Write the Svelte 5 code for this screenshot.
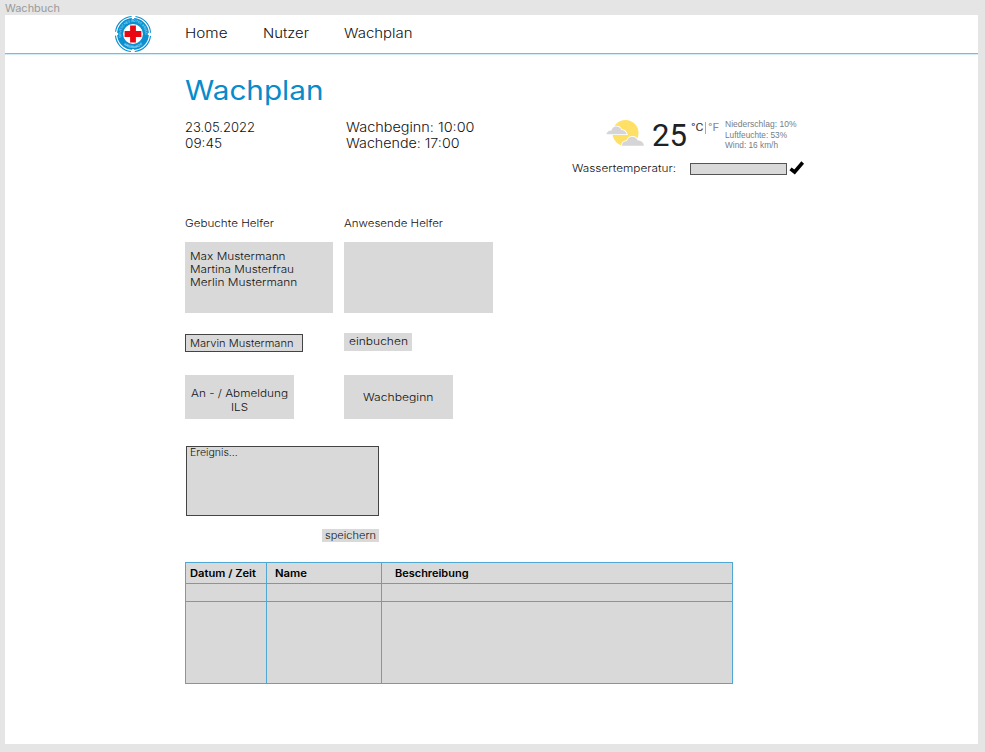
<script>
  const nav = [
    { text: 'Home', width: 42.5, gap: 35.5 },
    { text: 'Nutzer', width: 46, gap: 34.7 },
    { text: 'Wachplan', width: 68.5, gap: 0 }
  ];
  const booked = [
    { text: 'Max Mustermann', width: 95.5 },
    { text: 'Martina Musterfrau', width: 104 },
    { text: 'Merlin Mustermann', width: 107.3 }
  ];
  const weather = [
    { text: 'Niederschlag: 10%', width: 71.5 },
    { text: 'Luftfeuchte: 53%', width: 62 },
    { text: 'Wind: 16 km/h', width: 53 }
  ];
</script>

{#snippet label(text, width, size = 10.7, height = 14)}
  <svg class="label" {width} {height} font-size={size}>
    <text x="0" y={size} textLength={width} lengthAdjust="spacingAndGlyphs">{text}</text>
  </svg>
{/snippet}

<div class="canvas">
  <div class="caption">{@render label('Wachbuch', 55, 10.5, 14)}</div>
  <div class="frame">
    <header>
      <svg class="logo" width="38" height="38" viewBox="-19 -19 38 38">
        <circle r="18" fill="#fff" />
        <circle r="17.6" fill="none" stroke="#0b8fd0" stroke-width="1.1" stroke-dasharray="23.6 4.046" stroke-dashoffset="-2" />
        <circle r="12.9" fill="none" stroke="#0b8fd0" stroke-width="6" />
        <path d="M0 -16.4V-15M0 16.4V15M-16.4 0H-15M16.4 0H15" stroke="#fff" stroke-width="2" />
        <path id="arc-top" d="M-11.8 3.2A12.2 12.2 0 1 1 11.8 3.2" fill="none" />
        <path id="arc-bottom" d="M-11.4 8.2A14 14 0 0 0 11.4 8.2" fill="none" />
        <g font-size="3.2" font-weight="500" fill="#b5e0f5">
          <text><textPath href="#arc-top" textLength="42">DEUTSCHES ROTES KREUZ</textPath></text>
          <text><textPath href="#arc-bottom" startOffset="3" textLength="21">WASSERWACHT</textPath></text>
        </g>
        <path d="M-2.9 -8.4H2.9V-2.9H8.4V2.9H2.9V8.4H-2.9V2.9H-8.4V-2.9H-2.9Z" fill="#e90713" />
      </svg>
      <nav>
        {#each nav as item}
          <a href="#top" style="margin-right: {item.gap}px">{@render label(item.text, item.width, 13, 17)}</a>
        {/each}
      </nav>
    </header>

    <main>
      <h1>{@render label('Wachplan', 138.5, 26.7, 30)}</h1>

      <section class="info">
        <div class="date">
          {@render label('23.05.2022', 70, 13, 16)}
          {@render label('09:45', 37, 13, 16)}
        </div>
        <div class="shift">
          {@render label('Wachbeginn: 10:00', 128.5, 13, 16)}
          {@render label('Wachende: 17:00', 113.5, 13, 16)}
        </div>
        <div class="conditions">
          <div class="weather">
            <svg class="sun" width="40" height="30" viewBox="0 0 40 30">
              <circle cx="19.5" cy="14" r="13" fill="#ffe066" />
              <path d="M0.5 15.2Q1 11.5 5.5 11.4Q6.7 7.2 10.7 7.6Q14.3 7.9 15.1 10.7Q19.7 11.2 20.7 15.2Z" fill="#d5d5d7" stroke="#fff" stroke-width="1.6" paint-order="stroke" />
              <path d="M16 26.7Q16 22.4 20.8 22.1Q22.8 17.2 27.4 17.9Q30.4 18.2 31.4 21.3Q37 21.4 38 26.7Z" fill="#d5d5d7" stroke="#fff" stroke-width="1.6" paint-order="stroke" />
            </svg>
            <div class="degrees">{@render label('25', 35, 32, 36)}</div>
            <div class="units">
              <span>{@render label('°C', 12.5, 11)}</span>
              <i></i>
              <span class="off">{@render label('°F', 11, 11)}</span>
            </div>
            <div class="stats">
              {#each weather as line}
                {@render label(line.text, line.width, 8.6, 10.7)}
              {/each}
            </div>
          </div>
          <div class="water">
            {@render label('Wassertemperatur:', 104)}
            <div class="water-input"></div>
            <svg class="check" width="16" height="14" viewBox="0 0 16 14">
              <path d="M1.5 7.8L5.6 11L13.7 1.5" fill="none" stroke="#000" stroke-width="3.5" />
            </svg>
          </div>
        </div>
      </section>

      <section class="helpers">
        <div class="column">
          {@render label('Gebuchte Helfer', 89)}
          <div class="list">
            {#each booked as person}
              {@render label(person.text, person.width, 10.7, 13.4)}
            {/each}
          </div>
        </div>
        <div class="column">
          {@render label('Anwesende Helfer', 99)}
          <div class="list"></div>
        </div>
      </section>

      <section class="booking">
        <div class="name-input">{@render label('Marvin Mustermann', 103.5)}</div>
        <button class="book">{@render label('einbuchen', 59)}</button>
      </section>

      <section class="actions">
        <button class="big two-lines">
          {@render label('An - / Abmeldung', 97, 10.7, 13.6)}
          {@render label('ILS', 17, 10.7, 13.6)}
        </button>
        <button class="big">{@render label('Wachbeginn', 70.5, 10.7, 13.6)}</button>
      </section>

      <section class="event">
        <div class="textarea">{@render label('Ereignis...', 47.8, 10)}</div>
        <button class="save">{@render label('speichern', 51, 10, 13)}</button>
      </section>

      <div class="table">
        <div class="row head">
          <div>{@render label('Datum / Zeit', 66, 10)}</div>
          <div>{@render label('Name', 32, 10)}</div>
          <div>{@render label('Beschreibung', 73.5, 10)}</div>
        </div>
        <div class="row entry"><div></div><div></div><div></div></div>
        <div class="row rest"><div></div><div></div><div></div></div>
      </div>
    </main>
  </div>
</div>

<style>
  :global(body) { margin: 0; }
  .canvas {
    box-sizing: border-box;
    width: 985px;
    height: 752px;
    padding: 0 7px 8px 5px;
    background: #e5e5e5;
    font-family: Inter, "Open Sans", sans-serif;
    font-weight: 350;
    color: #111;
    overflow: hidden;
  }
  .label { display: block; flex: none; overflow: visible; fill: currentColor; }
  .caption { height: 14px; padding-top: 1px; color: #999; font-weight: 400; }
  .frame { height: 729px; background: #fff; }
  header {
    display: flex;
    height: 38px;
    border-bottom: 1px solid #73bfe2;
    box-shadow: 0 1px #d3ebf6;
  }
  .logo { margin: 0 0 0 109px; flex: none; }
  nav { display: flex; margin: 10px 0 0 33px; }
  nav a { color: inherit; text-decoration: none; }
  main { padding-left: 180px; }
  h1 { margin: 0; padding: 18.8px 0 0; color: #078ccb; font-weight: 400; }
  .info { display: flex; height: 97.2px; }
  .date { width: 161px; padding-top: 16.2px; }
  .shift { width: 226px; padding-top: 16.2px; }
  .conditions { padding-top: 12.2px; }
  .weather { display: flex; height: 46px; margin-left: 33px; font-family: Roboto, sans-serif; font-weight: 400; }
  .sun { margin: 4.5px 6px 0 1px; }
  .degrees { margin-top: -1.2px; color: #202124; }
  .units { display: flex; margin: 4.6px 0 0 4px; height: 14px; color: #333; width: 34px; }
  .units i { width: 1px; height: 12px; margin: 2px 2px 0 1.5px; background: #aaa; }
  .units .off { color: #878b93; }
  .stats { padding-top: 3px; font-family: "Liberation Sans", sans-serif; color: #787c82; }
  .water { display: flex; height: 16px; }
  .water :global(.label) { margin-top: 0.3px; }
  .water-input { box-sizing: border-box; width: 97px; height: 12px; margin: 2px 2px 0 14px; background: #d9d9d9; border: 1px solid #555; }
  .check { flex: none; }
  .helpers { display: flex; gap: 11px; padding-top: 16px; }
  .column { width: 148.4px; }
  .list { box-sizing: border-box; height: 70.6px; margin-top: 12.5px; padding: 6.2px 0 0 4.7px; background: #d9d9d9; }
  .booking { display: flex; padding-top: 20px; height: 42.3px; }
  .name-input { box-sizing: border-box; width: 118px; height: 18px; margin: 1px 41px 0 0; padding: 1.3px 0 0 3.5px; border: 1px solid #444; background: #d9d9d9; }
  button { display: block; padding: 0; border: 0; background: #d9d9d9; color: inherit; font: inherit; }
  .book { display: flex; width: 68px; height: 17.5px; padding: 0.8px 4.5px; }
  .actions { display: flex; gap: 50.5px; padding-left: 0.4px; height: 70.6px; }
  .big { display: flex; flex-direction: column; align-items: center; justify-content: center; width: 108.4px; height: 43.5px; }
  .two-lines { padding-top: 5.5px; }
  .event { width: 193px; margin-left: 1px; height: 116px; }
  .textarea { box-sizing: border-box; height: 70px; padding: 0 0 0 2.7px; border: 1px solid #444; background: #d9d9d9; }
  .textarea :global(.label) { margin-top: -0.9px; }
  .save { width: 57px; height: 13px; margin: 13px 0 0 auto; padding: 0 3px; }
  .table { box-sizing: border-box; width: 548px; border: 1px solid #4fa8d3; background: #d9d9d9; }
  .row { display: grid; grid-template-columns: 81px 115px 1fr; border-bottom: 1px solid #4fa8d3; }
  .row > div { border-right: 1px solid #4fa8d3; box-sizing: border-box; }
  .row > div:last-child { border-right: 0; }
  .row:last-child { border-bottom: 0; }
  .head { height: 20px; font-weight: 600; color: #000; }
  .head > div { padding: 4.5px 0 0 3.5px; }
  .head > div:nth-child(2) { padding-left: 7.5px; }
  .head > div:nth-child(3) { padding-left: 12.5px; }
  .entry { height: 17px; }
  .rest { height: 81px; }
</style>
